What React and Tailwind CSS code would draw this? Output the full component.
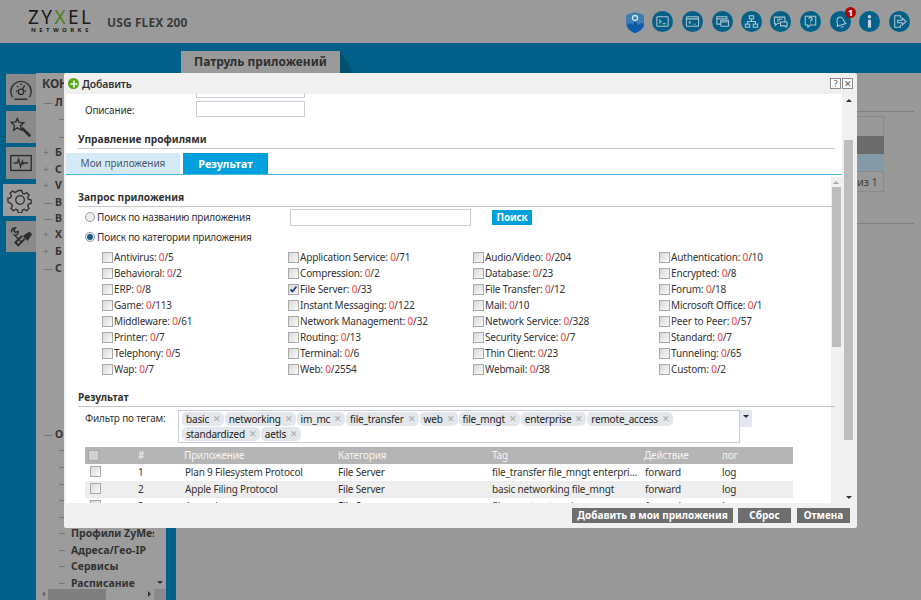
import { Plus } from "lucide-react";

const font = "font-['DejaVu_Sans_Condensed','DejaVu_Sans',sans-serif]";

const categories = [
  ["Antivirus", "5"], ["Application Service", "71"], ["Audio/Video", "204"], ["Authentication", "10"],
  ["Behavioral", "2"], ["Compression", "2"], ["Database", "23"], ["Encrypted", "8"],
  ["ERP", "8"], ["File Server", "33", true], ["File Transfer", "12"], ["Forum", "18"],
  ["Game", "113"], ["Instant Messaging", "122"], ["Mail", "10"], ["Microsoft Office", "1"],
  ["Middleware", "61"], ["Network Management", "32"], ["Network Service", "328"], ["Peer to Peer", "57"],
  ["Printer", "7"], ["Routing", "13"], ["Security Service", "7"], ["Standard", "7"],
  ["Telephony", "5"], ["Terminal", "6"], ["Thin Client", "23"], ["Tunneling", "65"],
  ["Wap", "7"], ["Web", "2554"], ["Webmail", "38"], ["Custom", "2"],
];

const tagsRow1 = ["basic", "networking", "im_mc", "file_transfer", "web", "file_mngt", "enterprise", "remote_access"];
const tagsRow2 = ["standardized", "aetls"];

const blue = "#036089";

const headerIcons = [
  [662, <><rect x="5.500" y="6.500" width="13" height="11" rx="1" /><path d="M8 10l2.500 2L8 14M12 14.500h4" /></>],
  [692, <><rect x="5" y="6.500" width="14" height="11" rx="1" /><path d="M5 9h14M10 11.500l-2 1.500 2 1.500M12.500 15h.8M15 15h.8" /></>],
  [722, <><path d="M15 15H5.500V6.500H17V9" /><path d="M5.500 9H17" /><rect x="10" y="10.500" width="9" height="7" rx="1" fill={blue} /><path d="M10 12.500h9" /></>],
  [751, <><rect x="9.500" y="5.500" width="5" height="3.500" /><rect x="5" y="15" width="5" height="3.500" /><rect x="14" y="15" width="5" height="3.500" /><path d="M12 9v3M7.500 15v-3h9v3" /></>],
  [780, <><path d="M5 7h12v7H9l-3 2.500V14H5z" /><path d="M8 9.500h6M8 11.500h3" /><path d="M12 12.500h7.500v4.500h-1v1.500L16.500 17H12z" fill={blue} /></>],
  [810, <><path d="M6 6h12v10h-6l-3 2.500V16H6z" /><path d="M10.300 9a1.800 1.800 0 1 1 2.500 1.800c-.6.3-.8.6-.8 1.200M12 13.500v.8" strokeWidth="1.500" /></>],
  [840, <g transform="rotate(-18 12 12)"><path d="M7 16c1.500-2 .5-5 2-7.500 1.300-2.200 4.700-2.200 6 0 1.500 2.500.5 5.500 2 7.500zM10.500 18c.8 1 2.200 1 3 0" /></g>],
  [869, <g stroke="none" fill="#c4d2d9"><circle cx="12" cy="6.500" r="2" /><rect x="10.200" y="10" width="3.600" height="9" /></g>],
  [899, <><path d="M13 8V5.500H6.500v13H13V16" /><path d="M10 10.500h5V8l4.500 4-4.500 4v-2.500h-5z" /></>],
];

function Arrow({ dir, x, y, color = "#333" }) {
  const pts = { up: "0,4 3,1 6,4", down: "0,1 6,1 3,4", left: "4,0 4,6 1,3", right: "1,0 1,6 4,3" }[dir];
  const w = dir === "up" || dir === "down" ? 6 : 5;
  const h = dir === "up" || dir === "down" ? 5 : 6;
  return (
    <svg className="absolute" style={{ left: x, top: y }} width={w} height={h} viewBox={`0 0 ${w} ${h}`}>
      <polygon points={pts} fill={color} />
    </svg>
  );
}

function CheckBox({ checked, className = "", style }) {
  return (
    <span className={`absolute w-[11px] h-[11px] border border-[#a9a9a9] bg-gradient-to-br from-[#d8d8d8] to-[#fafafa] ${className}`} style={style}>
      {checked && (
        <svg viewBox="0 0 9 9" className="w-full h-full">
          <path d="M1.500 4.500l2 2L7.500 1.500" fill="none" stroke="#1c3f94" strokeWidth="1.800" />
        </svg>
      )}
    </span>
  );
}

function Tag({ label }) {
  return (
    <span className="flex items-center h-[14px] rounded-[5px] bg-[#e3e6ea] pl-[4px] pr-[3px] mr-[1px] text-[#222] whitespace-nowrap">
      {label}
      <span className="ml-[4px] text-[#aaa] text-[9px]">✕</span>
    </span>
  );
}

function NavLine({ y, sign, label }) {
  return (
    <div className="absolute left-[43px] flex items-center whitespace-nowrap" style={{ top: y }}>
      <span className="w-[10px] text-[#777] font-normal mr-[2px] leading-[15px]">{sign}</span>
      <span className="font-bold text-[10.500px] leading-[15px] text-[#333]">{label}</span>
    </div>
  );
}

function SectionTitle({ top, children }) {
  return (
    <div className="absolute left-[78px] w-[757px] border-b border-[#c8c8c8]" style={{ top }}>
      <div className="font-bold text-[10.200px] leading-[15px] h-[16px] text-[#333] tracking-normal">{children}</div>
    </div>
  );
}

const tabIcons = [
  <>
    <path d="M5 22a11 11 0 1 1 18 0M7 24h14" />
    <circle cx="14" cy="16" r="3" />
    <path d="M15 14l3-5M8.500 15h1.500M10 9.500l1 1.500M14 7v2M19.500 15H18" />
  </>,
  <>
    <path d="M10 5l2 4 5 .5-3.500 3 1 5-4.500-2.500L6 17.500l1-5L3.500 9l5-.5z" />
    <path d="M15 15l9 9" strokeWidth="3" />
  </>,
  <>
    <rect x="3" y="6" width="22" height="16" />
    <path d="M6 14h4l1.500-4 2 8 2-6 1 3 1-1h4" />
  </>,
  <path d="M12 3h4l.8 3.200 2 .9 2.900-1.700 2.800 2.800-1.700 2.900.9 2 3.200.8v4l-3.200.8-.9 2 1.700 2.900-2.800 2.800-2.900-1.700-2 .9-.8 3.200h-4l-.8-3.200-2-.9-2.900 1.700-2.800-2.800 1.700-2.900-.9-2L0 16v-4l3.200-.8.9-2L2.400 6.300l2.800-2.800 2.900 1.700 2-.9zM14 9a5 5 0 1 0 0 10 5 5 0 0 0 0-10z" transform="translate(1 1) scale(.93)" />,
  <>
    <path d="M4 9c-1-3 1-5 4-5l-2 3 2 2 3-1c.5 3-2 4.500-4 4l8 8" />
    <path d="M17 13l6-4 2 2-4 6z" fill="#2e2e2e" />
    <path d="M18 16l-7 7-3-3 7-7" strokeWidth="2.200" />
  </>,
];

export default function App() {
  return (
    <div className={`relative w-[921px] h-[600px] overflow-hidden bg-[#006089] text-[10px] tracking-[-0.18px] text-[#333] ${font}`}>
      {/* top bar */}
      <div className="absolute inset-x-0 top-0 h-[43px] bg-[#9a9a9a]" />
      <div className="absolute left-[28px] top-[10px] text-[#1b1b1b] text-[19px] leading-[15px] font-['Liberation_Sans'] tracking-[2.400px]">
        ZY<span className="text-[#4f7d1a]">X</span>EL
      </div>
      <div className="absolute left-[31px] top-[27px] text-[#222] text-[6px] leading-[7px] tracking-[3.400px] font-bold font-['Liberation_Sans']">NETWORKS</div>
      <div className="absolute left-[107px] top-[15px] font-bold text-[12px] leading-[16px] tracking-[0.1px] text-[#3a3a3a]">USG FLEX 200</div>

      {/* header icons */}
      <svg className="absolute left-[624px] top-[11px]" width="22" height="23" viewBox="0 0 22 23">
        <path d="M11 1l9 3v9c0 5-5 8-9 9-4-1-9-4-9-9V4z" fill="#3d7fb4" />
        <path d="M3 14l3-2 3 2 2-5 3 5 3-2 3 1c-.5 5-5 7.500-9 9-4-1.500-7-4-8-8z" fill="#0d5aa8" />
        <circle cx="11" cy="7" r="2.500" fill="none" stroke="#cfe2f2" strokeWidth="1.300" />
      </svg>
      {headerIcons.map(([cx, ic]) => (
        <svg key={cx} className="absolute top-[11px]" style={{ left: cx - 10.500 }} width="21" height="21" viewBox="0 0 24 24" fill="none" stroke="#b5c4cc" strokeWidth="1.200">
          <circle cx="12" cy="12" r="12" fill={blue} stroke="none" />
          {ic}
        </svg>
      ))}
      <div className="absolute left-[845px] top-[7px] w-[11px] h-[11px] rounded-full bg-[#a80a0a] text-white text-[9px] leading-[11px] text-center font-bold">1</div>

      {/* page tab */}
      <div className="absolute left-[181px] top-[51px] w-[159px] h-[22px] bg-[#9a9a9a] text-center font-bold text-[12px] leading-[22px] tracking-normal text-[#2f2f2f]">Патруль приложений</div>
      <svg className="absolute left-[340px] top-[51px]" width="14" height="22" viewBox="0 0 14 22">
        <path d="M0 0l14 22H0z" fill="#00506f" />
      </svg>

      {/* page behind the dialog */}
      <div className="absolute left-[176px] right-0 top-[73px] bottom-0 bg-[#999]" />
      <div className="absolute left-[857px] top-[111px] h-[1px] w-[57px] bg-[#808080]" />
      <div className="absolute left-[857px] w-[27px] top-[116px] h-[21px] border border-[#8a8a8a] border-l-0" />
      <div className="absolute left-[857px] w-[27px] top-[136px] h-[18px] bg-[#6b6b6b]" />
      <div className="absolute left-[857px] w-[27px] top-[154px] h-[17px] bg-[#849aa6]" />
      <div className="absolute left-[857px] w-[27px] top-[171px] h-[21px] border border-[#8a8a8a] border-l-0 text-[#444] text-[11px] leading-[19px] whitespace-nowrap">из 1</div>
      <div className="absolute left-[857px] w-[57px] top-[223px] h-[1px] bg-[#808080]" />

      {/* left icon tabs */}
      {[
        [74, 31, 6],
        [111, 32, 6],
        [147, 32, 6],
        [184, 32, 3],
        [221, 31, 6],
      ].map(([top, h, left], i) => (
        <div key={i} className={`absolute flex items-center justify-center ${i === 3 ? "bg-[#9c9c9c]" : "bg-[#8a8a8a]"}`} style={{ top, height: h, left, width: 36 - left }}>
          <svg width="26" height="26" viewBox="0 0 28 28" fill="none" stroke="#2e2e2e" strokeWidth="1.500">
            {tabIcons[i]}
          </svg>
        </div>
      ))}

      {/* nav panel */}
      <div className="absolute left-[36px] top-[73px] w-[130px] h-[527px] bg-[#9c9c9c]" />
      <div className="absolute left-[42px] top-[76px] font-bold text-[12px] leading-[16px] text-[#333]">КОНФ</div>
      <NavLine y={95} sign="—" label="Л" />
      {[
        [145, "+", "Б"],
        [162, "+", "С"],
        [178, "+", "V"],
        [195, "—", "В"],
        [211, "—", "В"],
        [227, "+", "Х"],
        [244, "+", "Б"],
        [261, "—", "С"],
        [427, "—", "О"],
      ].map(([y, s, l]) => (
        <NavLine key={y} y={y} sign={s} label={l} />
      ))}
      {[119, 137, 450, 467, 484, 500, 517].map((y) => (
        <div key={y} className="absolute left-[59px] w-[5px] h-[1px] bg-[#777]" style={{ top: y }} />
      ))}
      {[
        ["Профили ZyMes", 526],
        ["Адреса/Гео-IP", 543],
        ["Сервисы", 559],
        ["Расписание", 576],
      ].map(([t, y]) => (
        <div key={t} className="absolute left-[59px] w-[95px] h-[15px] overflow-hidden whitespace-nowrap flex items-center" style={{ top: y }}>
          <span className="w-[6px] h-[1px] bg-[#777] mr-[6px] shrink-0" />
          <span className="font-bold text-[10.500px] tracking-normal leading-[15px] text-[#333]">{t}</span>
        </div>
      ))}
      <div className="absolute left-[48px] top-[589px] w-[58px] h-[11px] bg-[#7f7f7f]" />
      <div className="absolute left-[154px] top-[589px] w-[12px] h-[11px] bg-[#8a8a8a]" />
      <Arrow dir="left" x={41} y={591} color="#666" />
      <Arrow dir="right" x={147} y={591} />
      <Arrow dir="down" x={157} y={580} />

      {/* dialog */}
      <div className="absolute left-[64px] top-[73px] w-[793px] h-[455px] bg-[#f0f0f0] rounded-[2px]" />
      <div className="absolute left-[66px] top-[94px] w-[776px] h-[409px] bg-white" />
      <div className="absolute left-[68px] top-[78px] w-[11px] h-[11px] rounded-full bg-[#55a81c] flex items-center justify-center">
        <Plus size={10} color="#fff" strokeWidth={3.500} />
      </div>
      <div className="absolute left-[82px] top-[77px] text-[10.500px] leading-[15px] font-semibold text-[#333]">Добавить</div>
      <div className="absolute left-[830px] top-[78px] w-[11px] h-[11px] border border-[#8a8a8a] bg-white text-[9px] leading-[9px] text-center text-[#555]">?</div>
      <div className="absolute left-[842px] top-[78px] w-[11px] h-[11px] border border-[#8a8a8a] bg-white text-[9px] leading-[9px] text-center text-[#555]">✕</div>

      {/* outer scrollbar */}
      <div className="absolute left-[844px] top-[140px] w-[9px] h-[300px] bg-[#bdbdbd]" />
      <Arrow dir="up" x={846} y={98} />
      <Arrow dir="down" x={846} y={495} />

      {/* description */}
      <div className="absolute left-[196px] top-[94px] w-[109px] h-[4px] border border-t-0 border-[#ccccd8]" />
      <div className="absolute left-[85px] top-[103px] leading-[15px]">Описание:</div>
      <div className="absolute left-[196px] top-[101px] w-[109px] h-[16px] border border-[#ccccd8] bg-white" />

      <SectionTitle top={132}>Управление профилями</SectionTitle>

      {/* tabs */}
      <div className="absolute left-[66px] top-[153px] w-[114px] h-[21px] bg-[#d6e9f6] text-[#4a5a66] text-center leading-[21px] tracking-normal">Мои приложения</div>
      <div className="absolute left-[183px] top-[153px] w-[85px] h-[21px] bg-[#00a0dc] text-white font-bold text-center text-[11px] tracking-normal leading-[21px]">Результат</div>
      <div className="absolute left-[66px] top-[174px] w-[776px] h-[1px] bg-[#4cb8e6]" />

      {/* inner scrollbar */}
      <div className="absolute left-[831px] top-[177px] w-[11px] h-[326px] bg-[#f0f0f0]" />
      <div className="absolute left-[832px] top-[187px] w-[9px] h-[160px] bg-[#bdbdbd]" />
      <Arrow dir="up" x={833} y={180} color="#aaa" />

      <SectionTitle top={190}>Запрос приложения</SectionTitle>

      {/* radios */}
      <span className="absolute left-[85px] top-[212px] w-[10px] h-[10px] rounded-full border border-[#999] bg-[#eee]" />
      <div className="absolute left-[97px] top-[210px] leading-[15px]">Поиск по названию приложения</div>
      <div className="absolute left-[290px] top-[209px] w-[181px] h-[17px] border border-[#ccccd8] bg-white" />
      <div className="absolute left-[492px] top-[210px] w-[40px] h-[15px] bg-[#00a0dc] text-white font-bold text-center text-[10px] leading-[15px]">Поиск</div>
      <span className="absolute left-[85px] top-[232px] w-[10px] h-[10px] rounded-full border border-[#999] bg-[#eee] flex items-center justify-center">
        <span className="w-[6px] h-[6px] rounded-full bg-[#1b5f86]" />
      </span>
      <div className="absolute left-[97px] top-[230px] leading-[15px]">Поиск по категории приложения</div>

      {/* categories */}
      {categories.map(([name, total, checked], i) => {
        const x = [102, 288, 473, 659][i % 4];
        const y = 250 + Math.floor(i / 4) * 16;
        return (
          <div key={name}>
            <CheckBox checked={checked} style={{ left: x, top: y + 2 }} />
            <div className="absolute leading-[15px] whitespace-nowrap" style={{ left: x + 12, top: y }}>
              {name}: <span className="text-[#f04040]">0</span>/{total}
            </div>
          </div>
        );
      })}

      <SectionTitle top={390}>Результат</SectionTitle>

      {/* tag filter */}
      <div className="absolute left-[85px] top-[411px] leading-[15px]">Фильтр по тегам:</div>
      <div className="absolute left-[178px] top-[410px] w-[562px] h-[33px] border border-[#ccccd8] bg-white pl-[3px] pt-[1px]">
        <div className="flex h-[15px]">
          {tagsRow1.map((t) => <Tag key={t} label={t} />)}
        </div>
        <div className="flex h-[15px]">
          {tagsRow2.map((t) => <Tag key={t} label={t} />)}
        </div>
      </div>
      <div className="absolute left-[740px] top-[410px] w-[12px] h-[17px] bg-[#e4e8ee]" />
      <Arrow dir="down" x={743} y={414} color="#234" />

      {/* results table */}
      <div className="absolute left-[85px] top-[447px] w-[708px] h-[56px] overflow-hidden">
        <div className="relative h-[17px] bg-[#b5b5b5] text-[#f4f4f4] leading-[17px]">
          <span className="absolute left-[3px] top-[3px] w-[11px] h-[11px] border border-[#a9a9a9] bg-[#d0d0d0]" />
          <span className="absolute left-[53px]">#</span>
          <span className="absolute left-[99px]">Приложение</span>
          <span className="absolute left-[253px]">Категория</span>
          <span className="absolute left-[407px]">Tag</span>
          <span className="absolute left-[559px]">Действие</span>
          <span className="absolute left-[637px]">лог</span>
        </div>
        {[
          ["1", "Plan 9 Filesystem Protocol", "File Server", "file_transfer file_mngt enterpri...", "bg-white"],
          ["2", "Apple Filing Protocol", "File Server", "basic networking file_mngt", "bg-[#eeeeee]"],
          ["3", "Amanda", "File Server", "file_mngt enterprise", "bg-white"],
        ].map(([n, app, cat, tag, bg]) => (
          <div key={n} className={`relative h-[17px] leading-[17px] whitespace-nowrap ${bg}`}>
            <CheckBox className="left-[5px] top-[2px]" />
            <span className="absolute left-[53px]">{n}</span>
            <span className="absolute left-[100px]">{app}</span>
            <span className="absolute left-[253px]">{cat}</span>
            <span className="absolute left-[407px]">{tag}</span>
            <span className="absolute left-[560px]">forward</span>
            <span className="absolute left-[637px]">log</span>
          </div>
        ))}
      </div>

      {/* footer buttons */}
      <div className="absolute left-[572px] top-[508px] w-[161px] h-[15px] bg-[#6e6e6e] text-white font-bold text-center text-[10px] tracking-normal leading-[15px] whitespace-nowrap">Добавить в мои приложения</div>
      <div className="absolute left-[738px] top-[508px] w-[53px] h-[15px] bg-[#6e6e6e] text-white font-bold text-center text-[10px] tracking-normal leading-[15px]">Сброс</div>
      <div className="absolute left-[797px] top-[508px] w-[53px] h-[15px] bg-[#6e6e6e] text-white font-bold text-center text-[10px] tracking-normal leading-[15px]">Отмена</div>
    </div>
  );
}
